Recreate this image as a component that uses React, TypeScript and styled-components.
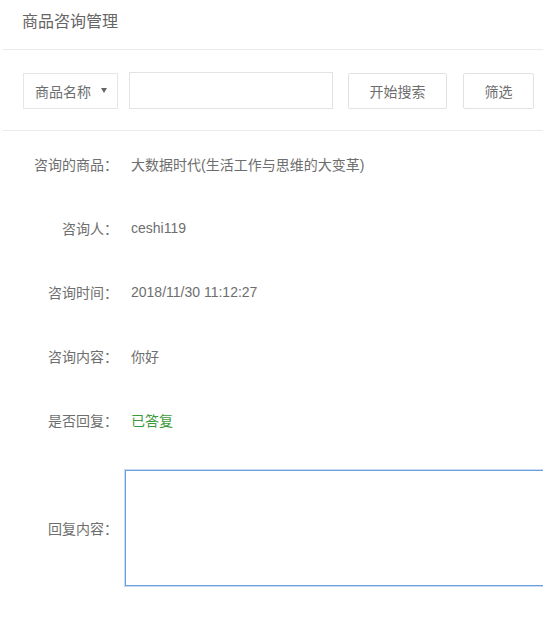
import React, { FC, useState } from 'react'
import styled, { createGlobalStyle } from 'styled-components'

const GlobalStyle = createGlobalStyle`
  html, body {
    margin: 0;
    padding: 0;
    background: #fff;
  }
  body {
    font-family: 'Liberation Sans', 'Noto Sans CJK SC', sans-serif;
    color: #6e6e6e;
  }
`

const Page = styled.div`
  width: 543px;
  height: 618px;
  overflow: hidden;
  background: #fff;
`

const Header = styled.div`
  padding: 12px 0 17px 19px;
  margin-left: 3px;
  font-size: 16px;
  line-height: 20px;
  color: #666;
  border-bottom: 1px solid #ebebeb;
`

const SearchBar = styled.div`
  display: flex;
  align-items: center;
  padding: 22px 0 21px 20px;
  margin-left: 3px;
  border-bottom: 1px solid #ebebeb;
`

const Select = styled.div`
  box-sizing: border-box;
  width: 95px;
  height: 36px;
  border: 1px solid #e6e6e6;
  display: flex;
  align-items: center;
  justify-content: space-between;
  padding: 0 10px 0 11px;
  font-size: 14px;
  color: #6e6e6e;
`

const Arrow = styled.span`
  width: 0;
  height: 0;
  border-left: 3px solid transparent;
  border-right: 3px solid transparent;
  border-top: 5px solid #666;
`

const SearchInput = styled.input`
  box-sizing: border-box;
  width: 204px;
  height: 37px;
  margin-left: 11px;
  border: 1px solid #e3e3e3;
  outline: none;
  font-size: 14px;
  padding: 0 8px;
`

const Button = styled.button<{ $width: number; $gap: number }>`
  box-sizing: border-box;
  width: ${p => p.$width}px;
  height: 36px;
  margin-left: ${p => p.$gap}px;
  border: 1px solid #e2e2e2;
  border-radius: 2px;
  background: #fff;
  font-family: inherit;
  font-size: 14px;
  color: #6e6e6e;
  cursor: pointer;
`

const Info = styled.div`
  padding-top: 1px;
`

const Row = styled.div`
  display: flex;
  align-items: center;
  height: 64px;
  font-size: 14px;
`

const Label = styled.div`
  width: 118px;
  text-align: right;
  color: #6e6e6e;
  flex-shrink: 0;
`

const Value = styled.div<{ $green?: boolean }>`
  margin-left: 13px;
  color: ${p => (p.$green ? '#3b9b3b' : '#6e6e6e')};
  white-space: nowrap;
`

const ReplyRow = styled.div`
  display: flex;
  align-items: center;
  margin-top: 18px;
  font-size: 14px;
`

const ReplyArea = styled.textarea`
  box-sizing: border-box;
  flex-shrink: 0;
  width: 440px;
  height: 116px;
  margin-left: 7px;
  border: 1px solid #6b9fe0;
  box-shadow: 0 0 0 1px #c6dbf5;
  outline: none;
  resize: none;
  font-family: inherit;
  font-size: 14px;
`

const fields = [
  { label: '咨询的商品：', value: '大数据时代(生活工作与思维的大变革)' },
  { label: '咨询人：', value: 'ceshi119' },
  { label: '咨询时间：', value: '2018/11/30 11:12:27' },
  { label: '咨询内容：', value: '你好' },
  { label: '是否回复：', value: '已答复', green: true },
]

const App: FC = () => {
  const [keyword, setKeyword] = useState('')
  const [reply, setReply] = useState('')

  return (
    <Page>
      <GlobalStyle />
      <Header>商品咨询管理</Header>
      <SearchBar>
        <Select>
          商品名称
          <Arrow />
        </Select>
        <SearchInput value={keyword} onChange={e => setKeyword(e.target.value)} />
        <Button $width={99} $gap={15}>开始搜索</Button>
        <Button $width={71} $gap={16}>筛选</Button>
      </SearchBar>
      <Info>
        {fields.map(f => (
          <Row key={f.label}>
            <Label>{f.label}</Label>
            <Value $green={f.green}>{f.value}</Value>
          </Row>
        ))}
        <ReplyRow>
          <Label>回复内容：</Label>
          <ReplyArea value={reply} onChange={e => setReply(e.target.value)} />
        </ReplyRow>
      </Info>
    </Page>
  )
}

export default App
